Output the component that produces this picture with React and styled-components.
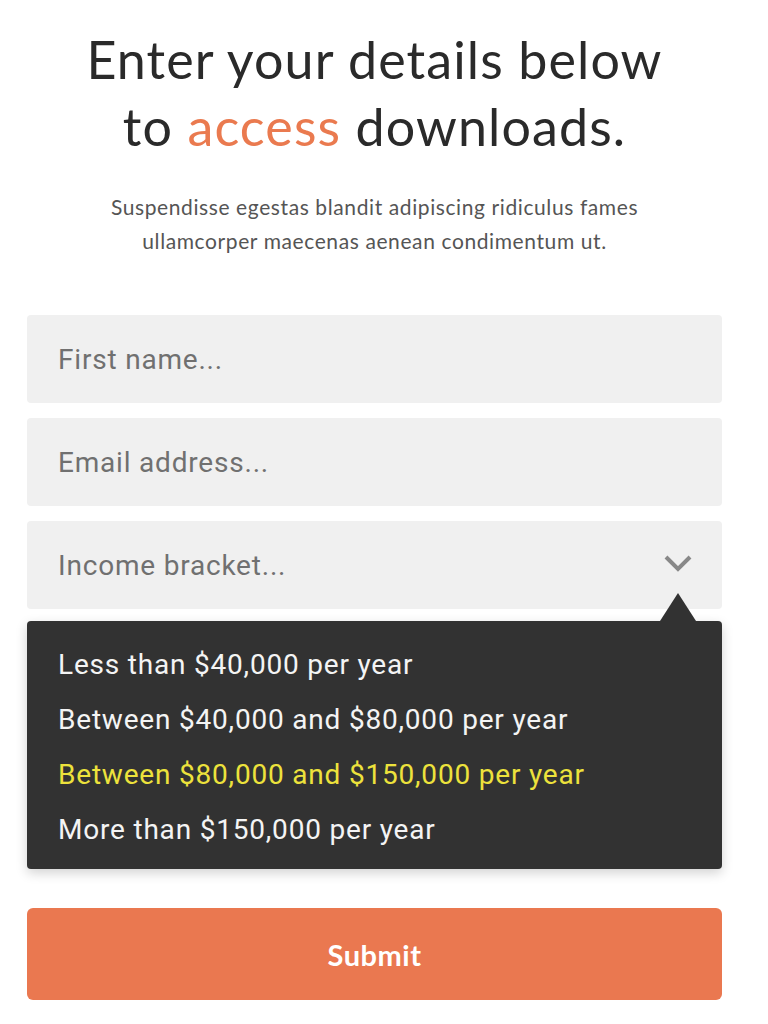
import React from "react";
import styled, { createGlobalStyle } from "styled-components";

const Global = createGlobalStyle`
  html, body {
    margin: 0;
    padding: 0;
    background: #fff;
  }
`;

const Page = styled.div`
  width: 695px;
  margin-left: 27px;
  padding-top: 26px;
`;

const Heading = styled.h1`
  margin: 0;
  font-family: Lato, "Open Sans", sans-serif;
  font-weight: 400;
  font-size: 52px;
  letter-spacing: 1.1px;
  line-height: 67px;
  color: #2a2a2a;
  text-align: center;
`;

const Accent = styled.span`
  color: #ea7a4f;
`;

const Lead = styled.p`
  margin: 30px 0 0;
  font-family: Lato, "Open Sans", sans-serif;
  font-size: 21px;
  letter-spacing: 0.6px;
  line-height: 34px;
  color: #555;
  text-align: center;
`;

const Form = styled.form`
  margin-top: 57px;
  display: flex;
  flex-direction: column;
  gap: 15px;
`;

const Field = styled.div`
  position: relative;
  height: 88px;
  background: #f0f0f0;
  border-radius: 4px;
  display: flex;
  align-items: center;
  padding: 0 31px;
  box-sizing: border-box;
  font-family: Roboto, sans-serif;
  font-size: 28px;
  letter-spacing: 0.8px;
  color: #707070;
`;

const Chevron = styled.svg`
  position: absolute;
  right: 29px;
  top: 33px;
`;

const Menu = styled.ul`
  position: relative;
  list-style: none;
  margin: 12px 0 0;
  padding: 16px 31px 12px;
  background: #323232;
  border-radius: 4px;
  box-shadow: 0 4px 12px rgba(0, 0, 0, 0.18);

  &::before {
    content: "";
    position: absolute;
    top: -28px;
    right: 26px;
    border-left: 18px solid transparent;
    border-right: 18px solid transparent;
    border-bottom: 28px solid #323232;
  }
`;

const Option = styled.li`
  font-family: Roboto, sans-serif;
  font-size: 28px;
  letter-spacing: 0.8px;
  line-height: 55px;
  color: ${(p) => (p.active ? "#ede23c" : "#f4f4f4")};
`;

const Submit = styled.button`
  margin-top: 39px;
  width: 100%;
  height: 92px;
  border: none;
  border-radius: 6px;
  background: #ea7850;
  color: #fff;
  font-family: Lato, sans-serif;
  font-weight: 700;
  font-size: 29px;
  letter-spacing: 0.5px;
`;

const options = [
  "Less than $40,000 per year",
  "Between $40,000 and $80,000 per year",
  "Between $80,000 and $150,000 per year",
  "More than $150,000 per year",
];

export default function App() {
  return (
    <>
      <Global />
      <Page>
        <Heading>
          Enter your details below
          <br />
          to <Accent>access</Accent> downloads.
        </Heading>
        <Lead>
          Suspendisse egestas blandit adipiscing ridiculus fames
          <br />
          ullamcorper maecenas aenean condimentum ut.
        </Lead>
        <Form onSubmit={(e) => e.preventDefault()}>
          <Field>First name...</Field>
          <Field>Email address...</Field>
          <Field>
            Income bracket...
            <Chevron width="30" height="18" viewBox="0 0 30 18">
              <path d="M3 3 L15 15 L27 3" fill="none" stroke="#888" strokeWidth="4" />
            </Chevron>
          </Field>
        </Form>
        <Menu>
          {options.map((o, i) => (
            <Option key={o} active={i === 2}>
              {o}
            </Option>
          ))}
        </Menu>
        <Submit type="button">Submit</Submit>
      </Page>
    </>
  );
}
